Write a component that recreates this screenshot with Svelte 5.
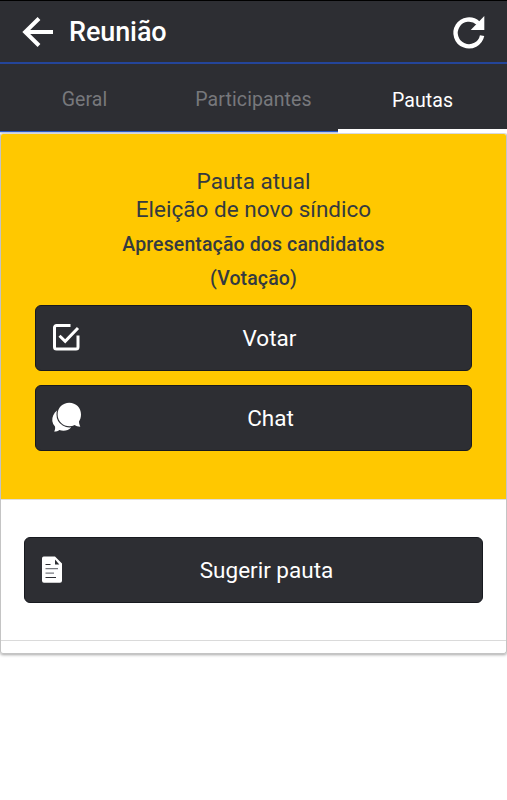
<script>
  const tabs = ['Geral', 'Participantes', 'Pautas'];
  let active = $state('Pautas');
</script>

<div class="screen">
  <header>
    <button class="plain back" aria-label="Voltar">
      <svg width="32" height="32" viewBox="0 0 32 32"><path d="M17 2.500 3.200 16 17 29.500M3.500 16H31" fill="none" stroke="#fff" stroke-width="4" /></svg>
    </button>
    <h1>Reunião</h1>
    <button class="plain refresh" aria-label="Atualizar">
      <svg width="34" height="34" viewBox="0 0 34 34">
        <path d="M26.100 8.100A13.400 13.400 0 1 0 30.100 20.600" fill="none" stroke="#fff" stroke-width="4.400" />
        <path d="M32.300 1v14H18.700z" fill="#fff" />
      </svg>
    </button>
  </header>
  <nav>
    {#each tabs as tab}
      <button class="plain tab" class:active={active === tab} onclick={() => (active = tab)}><span>{tab}</span></button>
    {/each}
  </nav>

  <main>
    <section class="current">
      <h2>Pauta atual</h2>
      <h2 class="subject">Eleição de novo síndico</h2>
      <h3>Apresentação dos candidatos</h3>
      <h3 class="kind">(Votação)</h3>
      <button class="action">
        <svg width="28" height="28" viewBox="0 0 28 28">
          <path d="M18.500 1.500H4.500a2 2 0 0 0-2 2v19.500a2 2 0 0 0 2 2h19.500a2 2 0 0 0 2-2V11.500" fill="none" stroke="#fff" stroke-width="3" />
          <path d="m7.500 11.700 5.700 5.600L26 4" fill="none" stroke="#fff" stroke-width="3" />
        </svg>
        <span>Votar</span>
      </button>
      <button class="action">
        <svg width="30" height="30" viewBox="0 0 30 30">
          <path d="M11 6A10.500 10.500 0 0 0 3 23.500c.4 1.900 0 3.600-.9 5 2.200 0 4-.5 5.200-1.500 4.200 1.500 9 .7 11.700-2.500Z" fill="#fff" />
          <path d="M17.300-.2c6.700 0 11.700 5 11.700 11.700 0 2.900-.8 5.300-2 7 0 2 .7 3.900 1.300 5.200-2.400 0-4.300-.7-5.500-1.600-7.800 3.700-17.200-1.500-17.200-10.600C5.600 4.800 10.600-.2 17.300-.2Z" fill="#fff" stroke="#2d2e33" stroke-width="2.200" paint-order="stroke" />
        </svg>
        <span>Chat</span>
      </button>
    </section>
    <section class="suggest">
      <button class="action">
        <svg width="22" height="28" viewBox="0 0 22 28">
          <path d="M3.300 .5H14l7 7v17.200a2 2 0 0 1-2 2H3a2 2 0 0 1-2-2V2.500a2 2 0 0 1 2.300-2Z" fill="#fff" />
          <path d="M14 3.500v5h4.300z" fill="#2d2e33" />
          <path d="M4.500 8.500h5M4.500 21.500h10.500" stroke="#2d2e33" stroke-width="1" />
          <path d="M4.500 12.700h12.500M4.500 17.200h8.500" stroke="#777a80" stroke-width="1.300" />
        </svg>
        <span>Sugerir pauta</span>
      </button>
    </section>
    <div class="foot"></div>
  </main>
</div>

<style>
  :global(body) { margin: 0; background: #fff; }
  * { box-sizing: border-box; }
  .screen { height: 800px; font-family: Roboto, sans-serif; color: #343a40; overflow: hidden; }
  button { font-family: inherit; cursor: pointer; }
  .plain { border: 0; padding: 0; background: none; }
  header { height: 64px; display: flex; align-items: center; padding: 0 21px 0 22px; background: #2d2e33; border-top: 1px solid #000; border-bottom: 2px solid #24459a; }
  header svg, .action svg { display: block; overflow: visible; }
  h1 { margin: 0 auto 0 15px; font-size: 27px; line-height: 32px; font-weight: 500; color: #fff; letter-spacing: -.1px; }
  nav { display: flex; height: 69px; background: #2d2e33; border-bottom: 1px solid #c9d2ea; }
  .tab { flex: 1; font-size: 19.500px; color: #77787c; height: 68px; padding-top: 3px; letter-spacing: .1px; border-bottom: 1px solid #2c59c4; }
  .tab.active { color: #fff; height: 69px; padding-top: 7px; border-bottom: 4px solid #fff; }
  main { height: 521px; border: 1px solid #c4c4c4; border-top-color: #d7d9df; border-radius: 3px; box-shadow: 0 1px 3px rgba(0,0,0,.35); }
  .current { height: 366px; padding: 33px 34px 0; background: #ffc800; border-bottom: 1px solid #dedede; text-align: center; border-radius: 2px 2px 0 0; }
  h2 { margin: 0; font-size: 22.500px; line-height: 28px; font-weight: 400; letter-spacing: .02px; }
  h3 { margin: 5px 0 0; font-size: 19.500px; line-height: 34px; font-weight: 500; letter-spacing: .12px; }
  .kind { margin: 0; }
  .action { display: flex; align-items: center; width: 100%; height: 66px; padding: 0 17px 0 16px; border: 1px solid #17191f; border-radius: 6px; background: #2d2e33; color: #fff; font-size: 22.500px; letter-spacing: 0; }
  .action span { flex: 1; text-align: center; padding-left: 5px; }
  .current .action { margin-top: 9px; }
  .current .action + .action { margin-top: 14px; }
  .suggest { height: 141px; padding: 37px 23px 0; border-bottom: 1px solid #dadada; }
</style>
